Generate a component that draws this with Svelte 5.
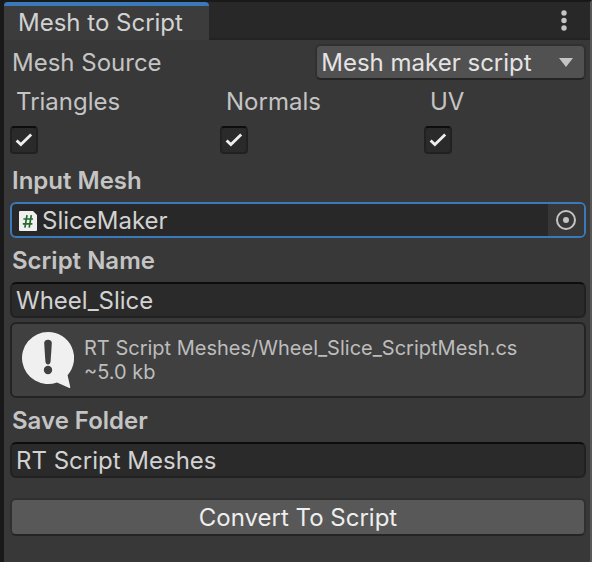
<script>
  let source = $state('Mesh maker script');
  let channels = $state([
    { id: 'triangles', label: 'Triangles', on: true },
    { id: 'normals', label: 'Normals', on: true },
    { id: 'uv', label: 'UV', on: true }
  ]);
  let inputMesh = $state('SliceMaker');
  let scriptName = $state('Wheel_Slice');
  let saveFolder = $state('RT Script Meshes');
</script>

<div class="window">
  <header class="tabbar">
    <h1 class="tab">Mesh to Script</h1>
    <button class="menu" aria-label="Window menu">
      <svg width="6" height="22" viewBox="0 0 6 22" fill="#c4c4c4">
        <circle cx="3" cy="3" r="2.7" />
        <circle cx="3" cy="10.5" r="2.7" />
        <circle cx="3" cy="18" r="2.7" />
      </svg>
    </button>
  </header>

  <main>
    <div class="source">
      <label class="plain" for="source">Mesh Source</label>
      <div class="dropdown">
        <select id="source" bind:value={source}>
          <option>Mesh maker script</option>
          <option>Mesh</option>
        </select>
        <svg class="arrow" width="16" height="9" viewBox="0 0 16 9" aria-hidden="true">
          <path d="M1 0H15L8 9Z" fill="#c4c4c4" />
        </svg>
      </div>
    </div>

    <div class="channels">
      {#each channels as channel (channel.id)}
        <div class="channel">
          <label for={channel.id}>{channel.label}</label>
          <span class="tick">
            <input id={channel.id} type="checkbox" bind:checked={channel.on} />
            {#if channel.on}
              <svg width="28" height="28" viewBox="0 0 28 28" aria-hidden="true">
                <path d="M6.6 14.4L10.9 18.6L21.2 8.6" fill="none" stroke="#eee" stroke-width="2.8" />
              </svg>
            {/if}
          </span>
        </div>
      {/each}
    </div>

    <label class="heading" for="mesh">Input Mesh</label>
    <div class="object">
      <svg class="file" width="18" height="22" viewBox="0 0 18 22" aria-hidden="true">
        <path d="M0 3Q0 2 1 2H14L18 6V21Q18 22 17 22H1Q0 22 0 21Z" fill="#f0f0f0" />
        <path d="M8 6.2L5.9 18.6M12.3 6.2L10.2 18.6M4.4 10H14M3.8 14.8H13.4" fill="none" stroke="#256b2e" stroke-width="1.7" />
      </svg>
      <input id="mesh" type="text" readonly value={inputMesh} />
      <button class="picker" aria-label="Select mesh">
        <svg width="20" height="20" viewBox="0 0 20 20">
          <circle cx="10" cy="10" r="9" fill="none" stroke="#c4c4c4" stroke-width="2" />
          <circle cx="10" cy="10" r="3" fill="#c4c4c4" />
        </svg>
      </button>
    </div>

    <label class="heading" for="name">Script Name</label>
    <input class="field" id="name" type="text" bind:value={scriptName} />

    <div class="help">
      <svg width="52" height="56" viewBox="0 0 52 56" aria-hidden="true">
        <path d="M26 0A26 26 0 0 1 45.6 43.2L48.2 54.8Q48.4 56.4 46.8 55.8L35 50.4A26 26 0 1 1 26 0Z" fill="#f0f0f0" />
        <path d="M22.2 11.4Q22.2 7.8 26 7.8T29.8 11.4L28.6 29.4Q28.2 32.4 26 32.4T23.4 29.4Z" fill="#404040" />
        <circle cx="26" cy="38" r="4.2" fill="#404040" />
      </svg>
      <p>RT Script Meshes/{scriptName}_ScriptMesh.cs<br />~5.0 kb</p>
    </div>

    <label class="heading" for="folder">Save Folder</label>
    <input class="field" id="folder" type="text" bind:value={saveFolder} />

    <button class="convert">Convert To Script</button>
  </main>
</div>

<style>
  :global(body) {
    margin: 0;
    background: #383838;
  }

  .window,
  .window * {
    box-sizing: border-box;
  }

  .window {
    min-height: 100vh;
    border-top: 2px solid #191919;
    border-left: 4px solid #191919;
    border-right: 2px solid #585858;
    background: #383838;
    color: #c4c4c4;
    font: 400 24px/36px Inter, "Noto Sans", sans-serif;
  }

  svg {
    display: block;
    flex: none;
  }

  input,
  select,
  button {
    margin: 0;
    font: inherit;
    color: inherit;
    outline: none;
  }

  .tabbar {
    display: flex;
    justify-content: space-between;
    height: 38px;
    background: #282828;
    box-shadow: inset 0 -2px #232323;
  }

  .tab {
    margin: 0;
    padding: 0 26px 0 14px;
    border-top: 4px solid #3a79bb;
    border-radius: 4px 4px 0 0;
    background: #3c3c3c;
    color: #d2d2d2;
    font-size: 24px;
    font-weight: inherit;
    line-height: 34px;
  }

  .menu {
    display: grid;
    place-items: center;
    width: 52px;
    padding: 0;
    border: 0;
    background: none;
  }

  main {
    display: flex;
    flex-direction: column;
    gap: 4px;
    padding: 4px 4px 24px 6px;
  }

  .source {
    display: flex;
    justify-content: space-between;
  }

  .plain,
  .heading {
    height: 36px;
    padding-left: 2px;
    line-height: 38px;
  }

  .heading {
    font-weight: 600;
  }

  .dropdown {
    display: grid;
    align-items: center;
    width: 47%;
  }

  select {
    grid-area: 1 / 1;
    width: 100%;
    height: 36px;
    padding: 2px 40px 0 4px;
    border: 2px solid #303030;
    border-bottom-color: #242424;
    border-radius: 6px;
    appearance: none;
    background: #515151;
    color: #e4e4e4;
    line-height: 30px;
  }

  .arrow {
    grid-area: 1 / 1;
    justify-self: end;
    margin-right: 12px;
    pointer-events: none;
  }

  .channels {
    display: grid;
    grid-template-columns: 210fr 204fr 162fr;
    padding-bottom: 4px;
  }

  .channel {
    display: flex;
    flex-direction: column;
    gap: 6px;
  }

  .channel label {
    padding-left: 6px;
  }

  .tick {
    display: grid;
    width: 28px;
    height: 28px;
  }

  .tick > :global(*) {
    grid-area: 1 / 1;
    pointer-events: none;
  }

  .tick input {
    width: 28px;
    height: 28px;
    border: 2px solid #212121;
    border-top-color: #0d0d0d;
    border-radius: 4px;
    appearance: none;
    background: #2a2a2a;
    pointer-events: auto;
  }

  .object {
    display: flex;
    align-items: center;
    height: 36px;
    padding-left: 7px;
    overflow: hidden;
    border: 2px solid #3a79bb;
    border-radius: 6px;
    background: #282828;
  }

  .object input {
    flex: 1;
    min-width: 0;
    height: 32px;
    padding: 2px 5px 0;
    border: 0;
    background: none;
    color: #d2d2d2;
  }

  .picker {
    display: grid;
    place-items: center;
    width: 36px;
    height: 32px;
    padding: 0;
    border: 0;
    background: #373737;
  }

  .field {
    width: 100%;
    height: 36px;
    padding: 2px 4px 0;
    border: 2px solid #212121;
    border-top-color: #0d0d0d;
    border-radius: 6px;
    background: #2a2a2a;
    color: #d2d2d2;
  }

  .help {
    display: flex;
    gap: 10px;
    height: 76px;
    padding: 8px 10px;
    border: 2px solid #232323;
    border-radius: 6px;
    background: #404040;
    color: #bdbdbd;
    font-size: 20px;
    line-height: 24px;
  }

  .help p {
    margin: 4px 0 0;
  }

  .convert {
    height: 38px;
    margin-top: 16px;
    padding: 2px 0 0;
    border: 2px solid #303030;
    border-bottom-color: #242424;
    border-radius: 6px;
    background: #585858;
    color: #eee;
    line-height: 32px;
  }
</style>
